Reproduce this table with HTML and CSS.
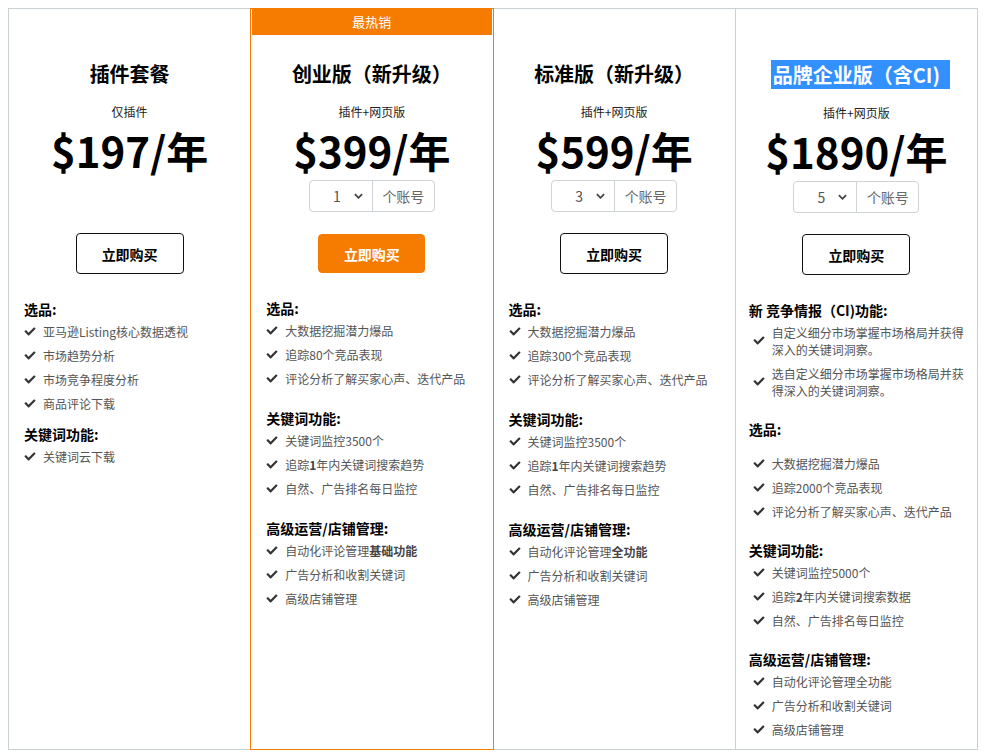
FILE: index.html
```html
<!DOCTYPE html>
<html lang="zh-CN">
<head>
<meta charset="utf-8">
<title>价格方案</title>
<link rel="stylesheet" href="styles.css">
</head>
<body>
<div class="plans">
  <div class="plan">
    <div class="plan-badge plan-badge--empty"></div>
    <div class="plan-head">
      <h2 class="plan-title">插件套餐</h2>
      <p class="plan-sub">仅插件</p>
      <p class="plan-price">$197/年</p>
      <div class="seats seats--empty"></div>
      <a class="buy">立即购买</a>
    </div>
    <div class="features features--tight">
      <section class="group">
        <h3 class="group-title">选品:</h3>
        <ul class="items">
          <li class="item"><svg class="check" viewBox="0 0 512 512"><path d="M173.9 439.4l-166.4-166.4c-10-10-10-26.2 0-36.2l36.2-36.2c10-10 26.2-10 36.2 0L192 312.7 432.1 72.6c10-10 26.2-10 36.2 0l36.2 36.2c10 10 10 26.2 0 36.2l-294.4 294.4c-10 10-26.2 10-36.2 0z"/></svg><span>亚马逊Listing核心数据透视</span></li>
          <li class="item"><svg class="check" viewBox="0 0 512 512"><path d="M173.9 439.4l-166.4-166.4c-10-10-10-26.2 0-36.2l36.2-36.2c10-10 26.2-10 36.2 0L192 312.7 432.1 72.6c10-10 26.2-10 36.2 0l36.2 36.2c10 10 10 26.2 0 36.2l-294.4 294.4c-10 10-26.2 10-36.2 0z"/></svg><span>市场趋势分析</span></li>
          <li class="item"><svg class="check" viewBox="0 0 512 512"><path d="M173.9 439.4l-166.4-166.4c-10-10-10-26.2 0-36.2l36.2-36.2c10-10 26.2-10 36.2 0L192 312.7 432.1 72.6c10-10 26.2-10 36.2 0l36.2 36.2c10 10 10 26.2 0 36.2l-294.4 294.4c-10 10-26.2 10-36.2 0z"/></svg><span>市场竞争程度分析</span></li>
          <li class="item"><svg class="check" viewBox="0 0 512 512"><path d="M173.9 439.4l-166.4-166.4c-10-10-10-26.2 0-36.2l36.2-36.2c10-10 26.2-10 36.2 0L192 312.7 432.1 72.6c10-10 26.2-10 36.2 0l36.2 36.2c10 10 10 26.2 0 36.2l-294.4 294.4c-10 10-26.2 10-36.2 0z"/></svg><span>商品评论下载</span></li>
        </ul>
      </section>
      <section class="group">
        <h3 class="group-title">关键词功能:</h3>
        <ul class="items">
          <li class="item"><svg class="check" viewBox="0 0 512 512"><path d="M173.9 439.4l-166.4-166.4c-10-10-10-26.2 0-36.2l36.2-36.2c10-10 26.2-10 36.2 0L192 312.7 432.1 72.6c10-10 26.2-10 36.2 0l36.2 36.2c10 10 10 26.2 0 36.2l-294.4 294.4c-10 10-26.2 10-36.2 0z"/></svg><span>关键词云下载</span></li>
        </ul>
      </section>
    </div>
  </div>

  <div class="plan plan--hot">
    <div class="plan-badge">最热销</div>
    <div class="plan-head">
      <h2 class="plan-title">创业版（新升级）</h2>
      <p class="plan-sub">插件+网页版</p>
      <p class="plan-price">$399/年</p>
      <div class="seats">
        <div class="seats-select"><span class="seats-value">1</span><svg class="chev" viewBox="0 0 10 6"><path d="M1 1l4 4 4-4"/></svg></div>
        <div class="seats-unit">个账号</div>
      </div>
      <a class="buy buy--primary">立即购买</a>
    </div>
    <div class="features">
      <section class="group">
        <h3 class="group-title">选品:</h3>
        <ul class="items">
          <li class="item"><svg class="check" viewBox="0 0 512 512"><path d="M173.9 439.4l-166.4-166.4c-10-10-10-26.2 0-36.2l36.2-36.2c10-10 26.2-10 36.2 0L192 312.7 432.1 72.6c10-10 26.2-10 36.2 0l36.2 36.2c10 10 10 26.2 0 36.2l-294.4 294.4c-10 10-26.2 10-36.2 0z"/></svg><span>大数据挖掘潜力爆品</span></li>
          <li class="item"><svg class="check" viewBox="0 0 512 512"><path d="M173.9 439.4l-166.4-166.4c-10-10-10-26.2 0-36.2l36.2-36.2c10-10 26.2-10 36.2 0L192 312.7 432.1 72.6c10-10 26.2-10 36.2 0l36.2 36.2c10 10 10 26.2 0 36.2l-294.4 294.4c-10 10-26.2 10-36.2 0z"/></svg><span>追踪80个竞品表现</span></li>
          <li class="item"><svg class="check" viewBox="0 0 512 512"><path d="M173.9 439.4l-166.4-166.4c-10-10-10-26.2 0-36.2l36.2-36.2c10-10 26.2-10 36.2 0L192 312.7 432.1 72.6c10-10 26.2-10 36.2 0l36.2 36.2c10 10 10 26.2 0 36.2l-294.4 294.4c-10 10-26.2 10-36.2 0z"/></svg><span>评论分析了解买家心声、迭代产品</span></li>
        </ul>
      </section>
      <section class="group">
        <h3 class="group-title">关键词功能:</h3>
        <ul class="items">
          <li class="item"><svg class="check" viewBox="0 0 512 512"><path d="M173.9 439.4l-166.4-166.4c-10-10-10-26.2 0-36.2l36.2-36.2c10-10 26.2-10 36.2 0L192 312.7 432.1 72.6c10-10 26.2-10 36.2 0l36.2 36.2c10 10 10 26.2 0 36.2l-294.4 294.4c-10 10-26.2 10-36.2 0z"/></svg><span>关键词监控3500个</span></li>
          <li class="item"><svg class="check" viewBox="0 0 512 512"><path d="M173.9 439.4l-166.4-166.4c-10-10-10-26.2 0-36.2l36.2-36.2c10-10 26.2-10 36.2 0L192 312.7 432.1 72.6c10-10 26.2-10 36.2 0l36.2 36.2c10 10 10 26.2 0 36.2l-294.4 294.4c-10 10-26.2 10-36.2 0z"/></svg><span>追踪<b>1</b>年内关键词搜索趋势</span></li>
          <li class="item"><svg class="check" viewBox="0 0 512 512"><path d="M173.9 439.4l-166.4-166.4c-10-10-10-26.2 0-36.2l36.2-36.2c10-10 26.2-10 36.2 0L192 312.7 432.1 72.6c10-10 26.2-10 36.2 0l36.2 36.2c10 10 10 26.2 0 36.2l-294.4 294.4c-10 10-26.2 10-36.2 0z"/></svg><span>自然、广告排名每日监控</span></li>
        </ul>
      </section>
      <section class="group">
        <h3 class="group-title">高级运营/店铺管理:</h3>
        <ul class="items">
          <li class="item"><svg class="check" viewBox="0 0 512 512"><path d="M173.9 439.4l-166.4-166.4c-10-10-10-26.2 0-36.2l36.2-36.2c10-10 26.2-10 36.2 0L192 312.7 432.1 72.6c10-10 26.2-10 36.2 0l36.2 36.2c10 10 10 26.2 0 36.2l-294.4 294.4c-10 10-26.2 10-36.2 0z"/></svg><span>自动化评论管理<b>基础功能</b></span></li>
          <li class="item"><svg class="check" viewBox="0 0 512 512"><path d="M173.9 439.4l-166.4-166.4c-10-10-10-26.2 0-36.2l36.2-36.2c10-10 26.2-10 36.2 0L192 312.7 432.1 72.6c10-10 26.2-10 36.2 0l36.2 36.2c10 10 10 26.2 0 36.2l-294.4 294.4c-10 10-26.2 10-36.2 0z"/></svg><span>广告分析和收割关键词</span></li>
          <li class="item"><svg class="check" viewBox="0 0 512 512"><path d="M173.9 439.4l-166.4-166.4c-10-10-10-26.2 0-36.2l36.2-36.2c10-10 26.2-10 36.2 0L192 312.7 432.1 72.6c10-10 26.2-10 36.2 0l36.2 36.2c10 10 10 26.2 0 36.2l-294.4 294.4c-10 10-26.2 10-36.2 0z"/></svg><span>高级店铺管理</span></li>
        </ul>
      </section>
    </div>
  </div>

  <div class="plan">
    <div class="plan-badge plan-badge--empty"></div>
    <div class="plan-head">
      <h2 class="plan-title">标准版（新升级）</h2>
      <p class="plan-sub">插件+网页版</p>
      <p class="plan-price">$599/年</p>
      <div class="seats">
        <div class="seats-select"><span class="seats-value">3</span><svg class="chev" viewBox="0 0 10 6"><path d="M1 1l4 4 4-4"/></svg></div>
        <div class="seats-unit">个账号</div>
      </div>
      <a class="buy">立即购买</a>
    </div>
    <div class="features">
      <section class="group">
        <h3 class="group-title">选品:</h3>
        <ul class="items">
          <li class="item"><svg class="check" viewBox="0 0 512 512"><path d="M173.9 439.4l-166.4-166.4c-10-10-10-26.2 0-36.2l36.2-36.2c10-10 26.2-10 36.2 0L192 312.7 432.1 72.6c10-10 26.2-10 36.2 0l36.2 36.2c10 10 10 26.2 0 36.2l-294.4 294.4c-10 10-26.2 10-36.2 0z"/></svg><span>大数据挖掘潜力爆品</span></li>
          <li class="item"><svg class="check" viewBox="0 0 512 512"><path d="M173.9 439.4l-166.4-166.4c-10-10-10-26.2 0-36.2l36.2-36.2c10-10 26.2-10 36.2 0L192 312.7 432.1 72.6c10-10 26.2-10 36.2 0l36.2 36.2c10 10 10 26.2 0 36.2l-294.4 294.4c-10 10-26.2 10-36.2 0z"/></svg><span>追踪300个竞品表现</span></li>
          <li class="item"><svg class="check" viewBox="0 0 512 512"><path d="M173.9 439.4l-166.4-166.4c-10-10-10-26.2 0-36.2l36.2-36.2c10-10 26.2-10 36.2 0L192 312.7 432.1 72.6c10-10 26.2-10 36.2 0l36.2 36.2c10 10 10 26.2 0 36.2l-294.4 294.4c-10 10-26.2 10-36.2 0z"/></svg><span>评论分析了解买家心声、迭代产品</span></li>
        </ul>
      </section>
      <section class="group">
        <h3 class="group-title">关键词功能:</h3>
        <ul class="items">
          <li class="item"><svg class="check" viewBox="0 0 512 512"><path d="M173.9 439.4l-166.4-166.4c-10-10-10-26.2 0-36.2l36.2-36.2c10-10 26.2-10 36.2 0L192 312.7 432.1 72.6c10-10 26.2-10 36.2 0l36.2 36.2c10 10 10 26.2 0 36.2l-294.4 294.4c-10 10-26.2 10-36.2 0z"/></svg><span>关键词监控3500个</span></li>
          <li class="item"><svg class="check" viewBox="0 0 512 512"><path d="M173.9 439.4l-166.4-166.4c-10-10-10-26.2 0-36.2l36.2-36.2c10-10 26.2-10 36.2 0L192 312.7 432.1 72.6c10-10 26.2-10 36.2 0l36.2 36.2c10 10 10 26.2 0 36.2l-294.4 294.4c-10 10-26.2 10-36.2 0z"/></svg><span>追踪<b>1</b>年内关键词搜索趋势</span></li>
          <li class="item"><svg class="check" viewBox="0 0 512 512"><path d="M173.9 439.4l-166.4-166.4c-10-10-10-26.2 0-36.2l36.2-36.2c10-10 26.2-10 36.2 0L192 312.7 432.1 72.6c10-10 26.2-10 36.2 0l36.2 36.2c10 10 10 26.2 0 36.2l-294.4 294.4c-10 10-26.2 10-36.2 0z"/></svg><span>自然、广告排名每日监控</span></li>
        </ul>
      </section>
      <section class="group">
        <h3 class="group-title">高级运营/店铺管理:</h3>
        <ul class="items">
          <li class="item"><svg class="check" viewBox="0 0 512 512"><path d="M173.9 439.4l-166.4-166.4c-10-10-10-26.2 0-36.2l36.2-36.2c10-10 26.2-10 36.2 0L192 312.7 432.1 72.6c10-10 26.2-10 36.2 0l36.2 36.2c10 10 10 26.2 0 36.2l-294.4 294.4c-10 10-26.2 10-36.2 0z"/></svg><span>自动化评论管理<b>全功能</b></span></li>
          <li class="item"><svg class="check" viewBox="0 0 512 512"><path d="M173.9 439.4l-166.4-166.4c-10-10-10-26.2 0-36.2l36.2-36.2c10-10 26.2-10 36.2 0L192 312.7 432.1 72.6c10-10 26.2-10 36.2 0l36.2 36.2c10 10 10 26.2 0 36.2l-294.4 294.4c-10 10-26.2 10-36.2 0z"/></svg><span>广告分析和收割关键词</span></li>
          <li class="item"><svg class="check" viewBox="0 0 512 512"><path d="M173.9 439.4l-166.4-166.4c-10-10-10-26.2 0-36.2l36.2-36.2c10-10 26.2-10 36.2 0L192 312.7 432.1 72.6c10-10 26.2-10 36.2 0l36.2 36.2c10 10 10 26.2 0 36.2l-294.4 294.4c-10 10-26.2 10-36.2 0z"/></svg><span>高级店铺管理</span></li>
        </ul>
      </section>
    </div>
  </div>

  <div class="plan">
    <div class="plan-badge plan-badge--empty"></div>
    <div class="plan-head">
      <h2 class="plan-title"><span class="selected">品牌企业版（含CI)</span></h2>
      <p class="plan-sub">插件+网页版</p>
      <p class="plan-price">$1890/年</p>
      <div class="seats">
        <div class="seats-select"><span class="seats-value">5</span><svg class="chev" viewBox="0 0 10 6"><path d="M1 1l4 4 4-4"/></svg></div>
        <div class="seats-unit">个账号</div>
      </div>
      <a class="buy">立即购买</a>
    </div>
    <div class="features features--indent">
      <section class="group">
        <h3 class="group-title">新 竞争情报（CI)功能:</h3>
        <ul class="items">
          <li class="item"><svg class="check" viewBox="0 0 512 512"><path d="M173.9 439.4l-166.4-166.4c-10-10-10-26.2 0-36.2l36.2-36.2c10-10 26.2-10 36.2 0L192 312.7 432.1 72.6c10-10 26.2-10 36.2 0l36.2 36.2c10 10 10 26.2 0 36.2l-294.4 294.4c-10 10-26.2 10-36.2 0z"/></svg><span>自定义细分市场掌握市场格局并获得深入的关键词洞察。</span></li>
          <li class="item"><svg class="check" viewBox="0 0 512 512"><path d="M173.9 439.4l-166.4-166.4c-10-10-10-26.2 0-36.2l36.2-36.2c10-10 26.2-10 36.2 0L192 312.7 432.1 72.6c10-10 26.2-10 36.2 0l36.2 36.2c10 10 10 26.2 0 36.2l-294.4 294.4c-10 10-26.2 10-36.2 0z"/></svg><span>选自定义细分市场掌握市场格局并获得深入的关键词洞察。</span></li>
        </ul>
      </section>
      <section class="group">
        <h3 class="group-title">选品:</h3>
        <ul class="items items--spaced">
          <li class="item"><svg class="check" viewBox="0 0 512 512"><path d="M173.9 439.4l-166.4-166.4c-10-10-10-26.2 0-36.2l36.2-36.2c10-10 26.2-10 36.2 0L192 312.7 432.1 72.6c10-10 26.2-10 36.2 0l36.2 36.2c10 10 10 26.2 0 36.2l-294.4 294.4c-10 10-26.2 10-36.2 0z"/></svg><span>大数据挖掘潜力爆品</span></li>
          <li class="item"><svg class="check" viewBox="0 0 512 512"><path d="M173.9 439.4l-166.4-166.4c-10-10-10-26.2 0-36.2l36.2-36.2c10-10 26.2-10 36.2 0L192 312.7 432.1 72.6c10-10 26.2-10 36.2 0l36.2 36.2c10 10 10 26.2 0 36.2l-294.4 294.4c-10 10-26.2 10-36.2 0z"/></svg><span>追踪2000个竞品表现</span></li>
          <li class="item"><svg class="check" viewBox="0 0 512 512"><path d="M173.9 439.4l-166.4-166.4c-10-10-10-26.2 0-36.2l36.2-36.2c10-10 26.2-10 36.2 0L192 312.7 432.1 72.6c10-10 26.2-10 36.2 0l36.2 36.2c10 10 10 26.2 0 36.2l-294.4 294.4c-10 10-26.2 10-36.2 0z"/></svg><span>评论分析了解买家心声、迭代产品</span></li>
        </ul>
      </section>
      <section class="group">
        <h3 class="group-title">关键词功能:</h3>
        <ul class="items">
          <li class="item"><svg class="check" viewBox="0 0 512 512"><path d="M173.9 439.4l-166.4-166.4c-10-10-10-26.2 0-36.2l36.2-36.2c10-10 26.2-10 36.2 0L192 312.7 432.1 72.6c10-10 26.2-10 36.2 0l36.2 36.2c10 10 10 26.2 0 36.2l-294.4 294.4c-10 10-26.2 10-36.2 0z"/></svg><span>关键词监控5000个</span></li>
          <li class="item"><svg class="check" viewBox="0 0 512 512"><path d="M173.9 439.4l-166.4-166.4c-10-10-10-26.2 0-36.2l36.2-36.2c10-10 26.2-10 36.2 0L192 312.7 432.1 72.6c10-10 26.2-10 36.2 0l36.2 36.2c10 10 10 26.2 0 36.2l-294.4 294.4c-10 10-26.2 10-36.2 0z"/></svg><span>追踪<b>2</b>年内关键词搜索数据</span></li>
          <li class="item"><svg class="check" viewBox="0 0 512 512"><path d="M173.9 439.4l-166.4-166.4c-10-10-10-26.2 0-36.2l36.2-36.2c10-10 26.2-10 36.2 0L192 312.7 432.1 72.6c10-10 26.2-10 36.2 0l36.2 36.2c10 10 10 26.2 0 36.2l-294.4 294.4c-10 10-26.2 10-36.2 0z"/></svg><span>自然、广告排名每日监控</span></li>
        </ul>
      </section>
      <section class="group">
        <h3 class="group-title">高级运营/店铺管理:</h3>
        <ul class="items">
          <li class="item"><svg class="check" viewBox="0 0 512 512"><path d="M173.9 439.4l-166.4-166.4c-10-10-10-26.2 0-36.2l36.2-36.2c10-10 26.2-10 36.2 0L192 312.7 432.1 72.6c10-10 26.2-10 36.2 0l36.2 36.2c10 10 10 26.2 0 36.2l-294.4 294.4c-10 10-26.2 10-36.2 0z"/></svg><span>自动化评论管理全功能</span></li>
          <li class="item"><svg class="check" viewBox="0 0 512 512"><path d="M173.9 439.4l-166.4-166.4c-10-10-10-26.2 0-36.2l36.2-36.2c10-10 26.2-10 36.2 0L192 312.7 432.1 72.6c10-10 26.2-10 36.2 0l36.2 36.2c10 10 10 26.2 0 36.2l-294.4 294.4c-10 10-26.2 10-36.2 0z"/></svg><span>广告分析和收割关键词</span></li>
          <li class="item"><svg class="check" viewBox="0 0 512 512"><path d="M173.9 439.4l-166.4-166.4c-10-10-10-26.2 0-36.2l36.2-36.2c10-10 26.2-10 36.2 0L192 312.7 432.1 72.6c10-10 26.2-10 36.2 0l36.2 36.2c10 10 10 26.2 0 36.2l-294.4 294.4c-10 10-26.2 10-36.2 0z"/></svg><span>高级店铺管理</span></li>
        </ul>
      </section>
    </div>
  </div>
</div>
</body>
</html>
```

FILE: styles.css
```css
* { box-sizing: border-box; }

html, body {
  background: #fff;
}

body {
  margin: 8px;
  font-family: "Noto Sans CJK SC", "Noto Sans", sans-serif;
  color: #000;
}

.plans {
  display: flex;
  width: 970px;
}

.plan {
  flex: 1 1 0;
  min-width: 0;
  border: 1px solid #c9d1d5;
  display: flex;
  flex-direction: column;
  position: relative;
}

.plan + .plan {
  margin-left: -1px;
}

.plan--hot {
  border-color: #f57c00;
  z-index: 1;
}

.plan-badge {
  height: 26px;
  margin: 0 1px;
  background: #f57c00;
  color: #fff;
  font-size: 13px;
  line-height: 26px;
  text-align: center;
}

.plan-badge--empty {
  background: transparent;
}

.plan-head {
  display: flex;
  flex-direction: column;
  align-items: center;
  padding: 25px 10px 0;
}

.plan-title {
  margin: 0;
  font-size: 20px;
  font-weight: 700;
  line-height: 28px;
  white-space: nowrap;
}

.selected {
  background: #3390ff;
  color: #fff;
  display: inline-block;
  line-height: 29px;
  padding: 0 10px 0 2px;
  margin: 0 -10px 0 -2px;
}

.plan-sub {
  margin: 15px 0 0;
  font-size: 12px;
  line-height: 18px;
  color: #222;
}

.plan-price {
  margin: 2px 0 0;
  font-size: 42px;
  font-weight: 700;
  line-height: 54px;
  white-space: nowrap;
}

.seats {
  margin-top: 3px;
  width: 126px;
  height: 32px;
  display: flex;
  border: 1px solid #cfd4d8;
  border-radius: 4px;
  font-size: 14px;
  color: #555;
}

.seats--empty {
  border-color: transparent;
}

.seats-select {
  width: 63px;
  display: flex;
  align-items: center;
  padding-left: 23px;
  border-right: 1px solid #cfd4d8;
}

.seats-value {
  flex: 1;
  line-height: 30px;
}

.chev {
  width: 9px;
  height: 6px;
  margin-right: 9px;
  fill: none;
  stroke: #444;
  stroke-width: 2;
}

.seats-unit {
  flex: 1;
  text-align: center;
  line-height: 30px;
  color: #666;
}

.buy {
  margin-top: 21px;
  width: 108px;
  height: 41px;
  border: 1px solid #111;
  border-radius: 4px;
  display: flex;
  align-items: center;
  justify-content: center;
  font-size: 14px;
  font-weight: 700;
  color: #000;
  text-decoration: none;
}

.buy--primary {
  background: #f57c00;
  border-color: #f57c00;
  color: #fff;
  width: 107px;
  height: 39px;
  margin-top: 22px;
}

.features {
  padding: 25px 14px 8px 15px;
}

.features--indent {
  padding: 25px 10px 8px 13px;
}

.group + .group {
  margin-top: 18px;
}

.features--tight .group + .group {
  margin-top: 9px;
}

.features--indent .group + .group {
  margin-top: 17px;
}

.group-title {
  margin: 0;
  font-size: 14px;
  font-weight: 700;
  line-height: 20px;
  color: #000;
}

.items {
  list-style: none;
  margin: 0;
  padding: 0;
}

.features--indent .items {
  padding-left: 4px;
}

.items--spaced {
  margin-top: 12px;
}

.item {
  display: flex;
  align-items: center;
  gap: 7px;
  padding: 3.5px 0;
  font-size: 12px;
  line-height: 17px;
  color: #555;
}

.item b {
  font-weight: 700;
  color: #444;
}

.check {
  flex: 0 0 12px;
  width: 12px;
  height: 11px;
  fill: #333;
}
```
